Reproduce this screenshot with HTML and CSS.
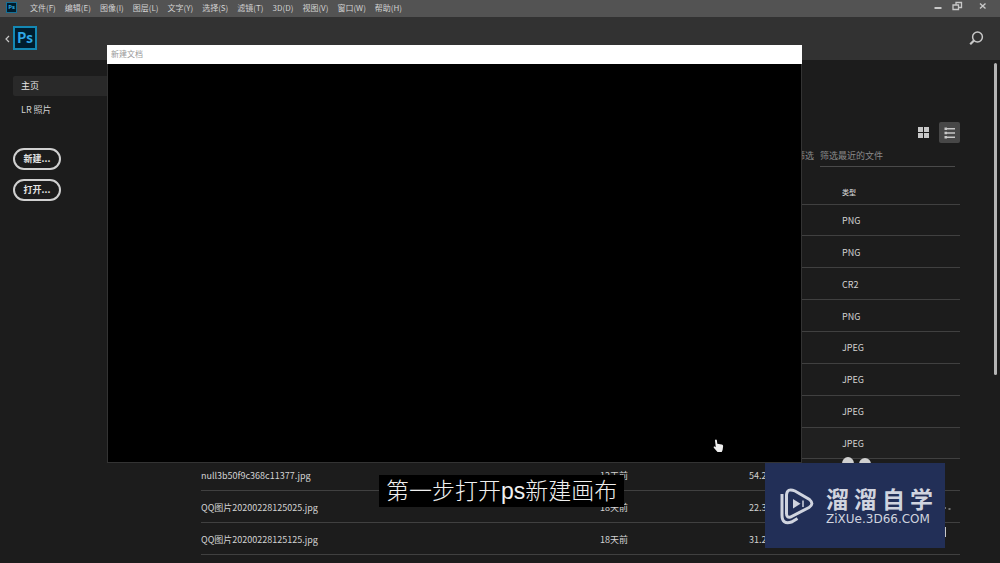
FILE: index.html
```html
<!DOCTYPE html>
<html lang="zh-CN">
<head>
<meta charset="utf-8">
<title>Photoshop</title>
<link rel="stylesheet" href="styles.css">
</head>
<body>
<div class="app">
  <header class="menubar">
    <span class="ps-mini">Ps</span>
    <nav class="menus">
      <button>文件(F)</button><button>编辑(E)</button><button>图像(I)</button><button>图层(L)</button><button>文字(Y)</button><button>选择(S)</button><button>滤镜(T)</button><button>3D(D)</button><button>视图(V)</button><button>窗口(W)</button><button>帮助(H)</button>
    </nav>
    <div class="window-controls">
      <button aria-label="最小化"><svg width="8" height="10" viewBox="0 0 8 10"><path d="M0.5 7h7" stroke-width="2"/></svg></button>
      <button aria-label="还原"><svg width="11" height="10" viewBox="0 0 11 10"><path d="M4 4V1.5h5.500v5H6.500M1 4h5.500v4.500H1z" stroke-width="1.300"/></svg></button>
      <button class="close" aria-label="关闭"><svg width="8" height="10" viewBox="0 0 8 10"><path d="M1 2.500l5.500 5M6.500 2.500l-5.500 5" stroke-width="1.400"/></svg></button>
    </div>
  </header>
  <div class="topbar">
    <button class="back" aria-label="返回"><svg width="5" height="8" viewBox="0 0 5 8"><path d="M4 1L1 4l3 3" stroke-width="1.200"/></svg></button>
    <span class="ps-logo">Ps</span>
    <button class="search" aria-label="搜索"><svg width="15" height="15" viewBox="0 0 15 15"><circle cx="8.500" cy="6" r="4.900" stroke-width="1.500"/><path d="M5 9.500L1.200 13.300" stroke-width="2.200"/></svg></button>
  </div>
  <div class="body">
    <aside class="sidebar">
      <nav class="side-nav">
        <a class="side-link active" href="#home">主页</a>
        <a class="side-link" href="#lr">LR 照片</a>
      </nav>
      <div class="side-actions">
        <button>新建...</button>
        <button>打开...</button>
      </div>
    </aside>
    <main class="content">
      <div class="views">
        <button aria-label="网格视图"><svg width="11" height="11" viewBox="0 0 11 11"><path class="solid" d="M0 0h5v5H0zM6 0h5v5H6zM0 6h5v5H0zM6 6h5v5H6z"/></svg></button>
        <button class="active" aria-label="列表视图"><svg width="12" height="12" viewBox="0 0 12 12"><path class="solid" d="M0.500 0.500h2.500v2.500h-2.500zM0.500 4.800h2.500v2.500h-2.500zM0.500 9h2.500v2.500h-2.500z"/><path d="M3 1.800h8M3 6h8M3 10.300h8" stroke-width="1.400"/></svg></button>
      </div>
      <div class="filter">
        <label for="filter">筛选</label>
        <input id="filter" type="text" placeholder="筛选最近的文件">
      </div>
      <table class="files">
        <colgroup><col class="c-name"><col class="c-date"><col class="c-size"><col class="c-type"></colgroup>
        <thead><tr><th></th><th></th><th></th><th>类型</th></tr></thead>
        <tbody>
          <tr><td></td><td></td><td></td><td>PNG</td></tr>
          <tr><td></td><td></td><td></td><td>PNG</td></tr>
          <tr><td></td><td></td><td></td><td>CR2</td></tr>
          <tr><td></td><td></td><td></td><td>PNG</td></tr>
          <tr><td></td><td></td><td></td><td>JPEG</td></tr>
          <tr><td></td><td></td><td></td><td>JPEG</td></tr>
          <tr><td></td><td></td><td></td><td>JPEG</td></tr>
          <tr class="hover"><td></td><td></td><td></td><td>JPEG</td></tr>
          <tr><td>null3b50f9c368c11377.jpg</td><td>12天前</td><td>54.2</td><td></td></tr>
          <tr><td>QQ图片20200228125025.jpg</td><td>18天前</td><td>22.3</td><td></td></tr>
          <tr><td>QQ图片20200228125125.jpg</td><td>18天前</td><td>31.2</td><td></td></tr>
        </tbody>
      </table>
    </main>
    <div class="v-thumb"></div>
  </div>
  <div class="h-thumb"></div>

  <section class="dialog" aria-label="新建文档">
    <h1>新建文档</h1>
    <svg class="pointer" width="11" height="14" viewBox="0 0 11 14"><path d="M2 1.500C2 .3 3.800.3 3.900 1.500l.4 3.300 4.400.8c1.200.3 1.500 1 1.400 2L9.600 11 8.700 13H4.500L1 9C.1 7.800 1.200 7 2.200 7.800l.6.5z"/></svg>
  </section>

  <p class="caption">第一步打开ps新建画布</p>

  <div class="bubbles"><i></i><i></i></div>
  <div class="edge-marks"><svg width="8" height="36" viewBox="0 0 8 36"><path d="M0 6h1M3.500 7h2" stroke-width="1.200"/><path d="M0.500 25v10" stroke-width="1"/></svg></div>
  <div class="brand">
    <svg class="brand-icon" width="36" height="38" viewBox="0 0 36 38">
      <path d="M6.500 8V26.500Q6.500 31 10.500 30L29 20.500Q34.500 17 29.500 12.500L15 4Q7 .5 6.500 8z"/>
      <path d="M2 7V28Q2 38 11.500 35L17.500 31.500"/>
      <path class="solid" d="M13 12l7.500 4.700-7.500 4.700z"/><path d="M23 13.500v6.500" stroke-width="1.500"/>
    </svg>
    <div class="brand-text">
      <strong><span>溜</span><span>溜</span><span>自</span><span>学</span></strong>
      <small>ZiXUe.3D66.COM</small>
    </div>
  </div>
</div>
</body>
</html>
```
FILE: styles.css
```css
* { box-sizing: border-box; }
body {
  margin: 0;
  background: #1c1c1c;
  color: #d2d2d2;
  font: 9px/12px "Noto Sans CJK SC", sans-serif;
}
button {
  margin: 0;
  padding: 0;
  border: 0;
  background: none;
  color: inherit;
  font: inherit;
}
svg { display: block; fill: none; stroke: #c8c8c8; }
.solid { fill: #c8c8c8; stroke: none; }
.app {
  position: relative;
  display: flex;
  flex-direction: column;
  min-height: 100vh;
  overflow: hidden;
}
.menubar {
  display: flex;
  align-items: center;
  height: 17px;
  padding: 0 13px 2px 6px;
  background: #535353;
  font-size: 8px;
}
.ps-mini {
  width: 11px;
  height: 11px;
  border: 1px solid #137099;
  background: #001d2e;
  color: #31a8df;
  font: bold 6px/9px "Open Sans", sans-serif;
  text-align: center;
}
.menus { display: flex; gap: 9px; margin-left: 13px; }
.window-controls {
  display: flex;
  align-items: center;
  gap: 10px;
  margin-left: auto;
  margin-bottom: 3px;
}
.window-controls .close { margin-left: 6px; }
.topbar {
  display: flex;
  align-items: center;
  height: 43px;
  padding: 0 16px 0 5px;
  background: #323232;
}
.ps-logo {
  width: 24px;
  height: 24px;
  margin: 0 0 2px 3px;
  border: 2px solid #1488b4;
  background: #001d2e;
  color: #2fa8e8;
  font: 600 14px/18px "Noto Sans CJK SC", sans-serif;
  text-align: center;
}
.search { margin-left: auto; }
.body { display: flex; flex: 1; }
.sidebar { width: 107px; padding: 16px 0 0 13px; }
.side-link {
  display: block;
  padding: 4px 8px;
  height: 20px;
  margin-bottom: 4px;
  border-radius: 2px 0 0 2px;
  color: inherit;
  text-decoration: none;
}
.side-link.active { background: #292929; color: #e6e6e6; }
.side-actions {
  display: grid;
  gap: 9px;
  width: 48px;
  margin-top: 28px;
}
.side-actions button {
  height: 22px;
  border: 2px solid #d0d0d0;
  border-radius: 11px;
  color: #e4e4e4;
  font-weight: bold;
}
.content {
  flex: 1;
  min-width: 0;
  padding: 62px 34px 9px 94px;
}
.views { display: flex; justify-content: flex-end; gap: 5px; }
.views button {
  display: grid;
  place-items: center;
  width: 21px;
  height: 21px;
  border-radius: 2px;
}
.views .active { background: #474747; }
.filter {
  display: flex;
  align-items: center;
  justify-content: flex-end;
  gap: 6px;
  margin: 2px 5px 0 0;
  color: #8a8a8a;
}
.filter input {
  width: 135px;
  height: 22px;
  padding: 0;
  border: 0;
  border-bottom: 1px solid #4a4a4a;
  background: none;
  color: #8a8a8a;
  font: inherit;
}
.filter input::placeholder { color: #8a8a8a; }
.files {
  width: 100%;
  height: 388px;
  table-layout: fixed;
  border-collapse: collapse;
}
.c-name { width: 399px; }
.c-date { width: 149px; }
.c-size { width: 93px; }
.files th, .files td {
  padding: 2px 0 0;
  border-bottom: 1px solid #404040;
  text-align: left;
  white-space: nowrap;
}
.files th { height: 37px; padding-top: 13px; font-size: 7px; font-weight: 500; }
.hover { background: #202020; }
.v-thumb {
  width: 3px;
  height: 312px;
  margin: 3px 3px 0 0;
  border-radius: 2px;
  background: #b4b4b4;
}
.h-thumb {
  position: absolute;
  left: 31px;
  bottom: 0;
  width: 224px;
  height: 1px;
  background: #8c8c8c;
}
.dialog {
  position: absolute;
  left: 107px;
  top: 45px;
  width: 695px;
  height: 418px;
  background: #000;
  box-shadow: inset 0 0 0 1px #333;
}
.dialog h1 {
  margin: 0;
  padding: 3px 4px;
  height: 19px;
  background: #fff;
  color: #999;
  font-size: 8px;
  font-weight: 400;
}
.pointer {
  position: absolute;
  left: 606px;
  top: 394px;
  fill: #eee;
  stroke: none;
}
.caption {
  position: absolute;
  left: 379px;
  top: 475px;
  margin: 0;
  padding: 1px 7px 0;
  background: #000;
  color: #f0f0f0;
  font: 300 23px/31px "Liberation Sans", "Noto Sans CJK SC", sans-serif;
  white-space: nowrap;
}
.bubbles {
  position: absolute;
  left: 842px;
  top: 457px;
  display: flex;
  align-items: flex-end;
  gap: 5px;
  height: 13px;
}
.bubbles i { width: 12px; height: 12px; border-radius: 50%; background: #d0d0d0; }
.bubbles i:first-child { height: 13px; }
.edge-marks { position: absolute; left: 945px; top: 502px; }
.brand {
  position: absolute;
  left: 765px;
  top: 463px;
  display: flex;
  align-items: center;
  gap: 10px;
  width: 180px;
  height: 85px;
  padding-left: 15px;
  background: #222f57;
  color: #d0d4df;
}
.brand-icon { stroke: #d0d4df; stroke-width: 3; }
.brand-icon .solid { fill: #d0d4df; stroke: none; }
.brand-text { display: grid; gap: 2px; }
.brand-text strong {
  display: flex;
  gap: 5px;
  font-size: 23px;
  line-height: 25px;
  font-weight: 700;
}
.brand-text small { font: 12px/13px "DejaVu Sans", sans-serif; }
```
